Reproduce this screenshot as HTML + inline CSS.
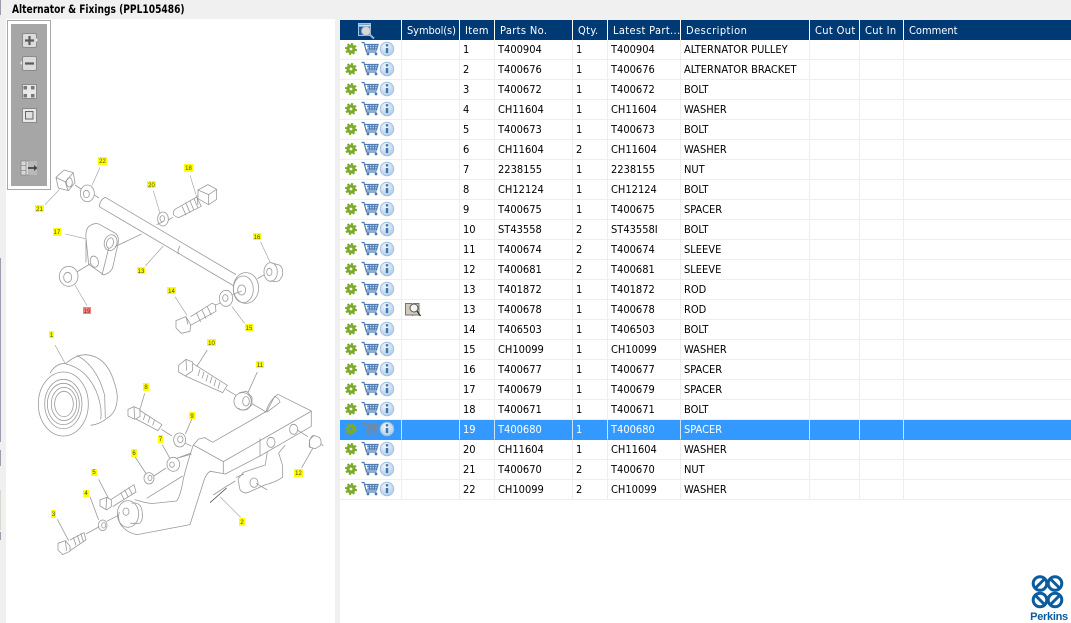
<!DOCTYPE html>
<html><head><meta charset="utf-8"><title>Alternator &amp; Fixings</title>
<style>
html,body{margin:0;padding:0;width:1071px;height:623px;overflow:hidden;background:#fff;font-family:"DejaVu Sans Condensed","DejaVu Sans","Liberation Sans",sans-serif}
#top{position:absolute;left:0;top:0;width:1071px;height:20px;background:#f0f0f0}
#title{position:absolute;left:12px;top:1px;font:bold 11.5px/16px "DejaVu Sans Condensed","Liberation Sans",sans-serif;color:#000;white-space:nowrap;transform:scaleX(.88);transform-origin:0 0}
#lside{position:absolute;left:0;top:0;width:6px;height:623px;background:#f0f0f0}
#rside{position:absolute;left:335px;top:0;width:5px;height:623px;background:#f0f0f0}
.st{position:absolute;left:0;width:1px;background:#9a9dae}
#art{position:absolute;left:0;top:0}
table{position:absolute;left:340px;top:20px;width:731px;border-collapse:separate;border-spacing:0;table-layout:fixed;font-size:11px;color:#000}
th{height:20px;box-sizing:border-box;background:#003a75;color:#fff;font-weight:normal;text-align:left;padding:0 0 0 5px;border-right:1px solid #fff;letter-spacing:.35px;white-space:nowrap;overflow:hidden;font-size:11px}
td{height:20px;box-sizing:border-box;padding:0 0 0 3px;border-right:1px solid #eee;border-bottom:1px solid #eee;white-space:nowrap;overflow:hidden;position:relative}
th:last-child,td:last-child{border-right:0}
td:first-child,th:first-child{padding:0}
td svg,th svg{display:block}
tr.s td{background:#3399ff;color:#fff;border-right-color:#cfe4fb;border-bottom-color:#3399ff}
</style></head><body>
<svg width="0" height="0" style="position:absolute">
<defs>
<radialGradient id="ig" cx=".4" cy=".3" r=".8"><stop offset="0" stop-color="#f1f6fb"/><stop offset="1" stop-color="#a9c8e6"/></radialGradient>
<symbol id="ic" viewBox="0 0 62 19" width="62" height="19">
<circle cx="11" cy="9" r="3" fill="none" stroke="#7cab2c" stroke-width="3.200"/>
<circle cx="11" cy="9" r="5" fill="none" stroke="#7cab2c" stroke-width="2" stroke-dasharray="2.100 1.800"/>
<path d="M21.500 2.500h2.500l2.500 9.500h10M25 4.500h13l-1.500 5.500h-10.500M27 6.300h10.500M27.500 8.200h9.500M29 4.500l.8 5.500M32 4.500v5.500M35 4.500l-.8 5.500" fill="none" stroke="#4c7cb3" stroke-width="1.200"/>
<circle cx="28" cy="14" r="1.400" fill="#4c7cb3"/><circle cx="36" cy="14" r="1.400" fill="#4c7cb3"/>
<circle cx="47" cy="9" r="6.800" fill="url(#ig)" stroke="#9dbcdb" stroke-width=".8"/>
<path d="M47 8v5" stroke="#3f77ad" stroke-width="2.400"/><circle cx="47" cy="5.300" r="1.300" fill="#3f77ad"/>
</symbol>
<symbol id="ics" viewBox="0 0 62 19" width="62" height="19">
<circle cx="11" cy="9" r="3" fill="#3399ff" stroke="#7cab2c" stroke-width="3.200"/>
<circle cx="11" cy="9" r="5" fill="none" stroke="#7cab2c" stroke-width="2" stroke-dasharray="2.100 1.800"/>
<path d="M21.500 2.500h2.500l2.500 9.500h10M25 4.500h13l-1.500 5.500h-10.500M27 6.300h10.500M27.500 8.200h9.500M29 4.500l.8 5.500M32 4.500v5.500M35 4.500l-.8 5.500" fill="none" stroke="#6f8aa8" stroke-width="1.200"/>
<circle cx="28" cy="14" r="1.400" fill="#6f8aa8"/><circle cx="36" cy="14" r="1.400" fill="#6f8aa8"/>
<circle cx="47" cy="9" r="6.800" fill="url(#ig)" stroke="#9dbcdb" stroke-width=".8"/>
<path d="M47 8v5" stroke="#3f77ad" stroke-width="2.400"/><circle cx="47" cy="5.300" r="1.300" fill="#3f77ad"/>
</symbol>
</defs></svg>

<div id="top"></div><div id="lside"></div><div id="rside"></div>
<div class="st" style="top:0;height:15px"></div><div class="st" style="top:258px;height:184px"></div><div class="st" style="top:450px;height:16px"></div><div class="st" style="top:490px;height:40px;background:#d5d8cc"></div><div class="st" style="top:532px;height:8px"></div>
<div id="title">Alternator &amp; Fixings (PPL105486)</div>

<svg id="art" width="336" height="623" viewBox="0 0 336 623">
<defs><filter id="soft" x="-5%" y="-5%" width="110%" height="110%"><feGaussianBlur stdDeviation=".3"/></filter></defs>
<rect x="6" y="19" width="329" height="1" fill="#fff"/>
<g filter="url(#soft)" fill="none" stroke="#9a9a9a" stroke-width="2.400" stroke-linejoin="round">
<g transform="translate(0,150) scale(.3333)">
<path d="M168 82l24-22 28 8 5 30-20 24-30-8zM168 82l28 14 8 26M196 96l24-28"/><ellipse cx="208" cy="97" rx="9" ry="14"/>
<path d="M225 105l18 12"/>
<ellipse cx="262" cy="130" rx="21" ry="25"/><ellipse cx="259" cy="132" rx="9" ry="11"/>
<path d="M283 135l14 9"/>
<path d="M316 142l392 232M298 170l404 238M298 170q2-22 18-28M540 288q-8 14-5 25M345 290l80-38"/>
<g stroke-width="1.800"><path d="M300 52l-24 54M570 76l18 58M460 122l20 68M135 164l44-46M196 252l60 14M782 276l28 60M490 288l-54 60M225 405l36 62M525 440l36 56M696 470l38 50"/></g>
<path d="M594 120l30-16 26 14v30l-24 16-32-18zM594 120l32 14v30M626 134l24-16M590 135l4 30"/>
<path d="M530 175l60-34 14 28-68 34q-18-6-16-14q0-10 10-14zM546 168l12 28M558 160l12 28M570 153l12 28M582 146l12 28"/>
<ellipse cx="489" cy="207" rx="16" ry="21"/><ellipse cx="487" cy="206" rx="7" ry="9"/><path d="M470 224l18-8M505 210l14-8"/>
<path d="M258 265q-2-30 12-38 16-10 28-4l50 28q10 10 6 30l-16 72q-4 14-26 22l-46-32zM258 338l0-72M306 375l20-80"/>
<ellipse cx="332" cy="278" rx="19" ry="24" transform="rotate(15 332 278)"/><ellipse cx="330" cy="279" rx="10" ry="16" transform="rotate(15 330 279)"/>
<ellipse cx="283" cy="335" rx="12" ry="17" transform="rotate(-15 283 335)"/><path d="M232 365l40-24"/>
<ellipse cx="206" cy="379" rx="28" ry="30"/><ellipse cx="203" cy="382" rx="12" ry="15"/>
<ellipse cx="738" cy="414" rx="38" ry="46"/><ellipse cx="730" cy="418" rx="30" ry="40"/><ellipse cx="725" cy="420" rx="12" ry="15"/>
<path d="M812 338l28 8q10 8 8 30l-10 16q-14 6-26 0M772 386l22-12"/><ellipse cx="812" cy="366" rx="20" ry="28"/><ellipse cx="808" cy="366" rx="8" ry="11"/>
<ellipse cx="678" cy="445" rx="20" ry="24"/><ellipse cx="676" cy="444" rx="8" ry="10"/><path d="M695 435l30-12M645 466l16-7"/>
<path d="M528 512l30-12 14 24-2 20-26 6-16-16zM558 500l6 24M572 500l64-40 10 4 2 20-76 42M590 490l12 26M606 480l12 26M622 470l12 26"/>
</g>
<g transform="translate(0,330) scale(.3333)">
<path d="M165 45l32 58" stroke-width="1.800"/>
<ellipse cx="190" cy="222" rx="75" ry="96"/><ellipse cx="190" cy="222" rx="56" ry="74"/><ellipse cx="190" cy="222" rx="48" ry="62"/><ellipse cx="192" cy="222" rx="38" ry="50"/><ellipse cx="192" cy="222" rx="28" ry="38"/>
<path d="M150 130q16-30 48-30 30-26 60-26 60 4 84 80 10 30 10 50-2 44-30 60-24 20-50 22"/><path d="M198 102q60 14 90 80 20 50 14 86"/><path d="M230 76q60 30 84 120l2 68"/>
<path d="M536 106l22-18 20 8 0 26-22 16-20-12zM558 88l2 34M578 100l104 66-14 22-112-50M600 118l-6 20M612 126l-6 20M624 134l-6 20M636 140l-6 20M648 148l-6 20M660 156l-6 20M678 178l30 18M622 60l-32 50M772 126l-28 62"/>
<path d="M718 188l22-4 16 18 0 22-14 14q-20 6-26-4"/><ellipse cx="728" cy="214" rx="26" ry="26"/><ellipse cx="738" cy="214" rx="10" ry="14"/><path d="M758 222l40 24"/>
<path d="M384 238l18-8 18 8 0 22-16 8-20-10zM402 230l2 36M418 240l68 44-12 18-68-36M436 252l-6 18M450 260l-6 18M464 268l-6 18M434 190l-14 48M484 298l32 20"/>
<ellipse cx="539" cy="330" rx="18" ry="21"/><ellipse cx="541" cy="328" rx="8" ry="10"/><path d="M576 266l-20 46M556 340l18 8"/>
<path d="M487 344l22 40M538 382l32-12"/><ellipse cx="520" cy="403" rx="19" ry="21"/><ellipse cx="516" cy="404" rx="7" ry="8"/>
<path d="M405 380l34 52M462 438l36-24"/><ellipse cx="447" cy="445" rx="15" ry="17"/><ellipse cx="450" cy="444" rx="6" ry="8"/>
<path d="M300 510l20-8 14 8 0 20-14 10-20-12zM320 502l-2 36M334 508l68-44 6 22-70 44M362 488l10 20M374 480l10 20M386 472l10 20M296 448l30 58"/>
<path d="M174 640l22-8 14 16 0 16-22 10-14-14zM196 632l4 30M210 630l42-22 6 22-48 32M220 622l8 24M232 616l8 24M242 610l8 24M172 568l34 64M258 612l40-22"/>
<path d="M270 500l26 70M320 574l36-18"/><ellipse cx="308" cy="586" rx="13" ry="16"/><ellipse cx="311" cy="586" rx="6" ry="8"/>
<path d="M548 438L440 505M575 372L530 385"/>
<path d="M580 345l16-18 18-4 24 14 160-92q10-34 36-52l100 50v46L780 378l-104 54-44-8q-14 4-24 40l-38 120-158 30q-30-4-50-30-10-20-4-38l0 0"/>
<path d="M580 345l90 50v37M670 395L935 243M780 325v52M800 245q14-26 24-46 16 8 16 18l-40 30"/>
<path d="M580 345q-18 52-30 102-8 50-20 66l-76 8q-26-4-50-12"/>
<ellipse cx="813" cy="337" rx="12" ry="15"/><ellipse cx="881" cy="298" rx="12" ry="15"/><path d="M892 300l32 20"/>
<ellipse cx="384" cy="552" rx="32" ry="40"/><ellipse cx="378" cy="545" rx="9" ry="11"/><path d="M395 520q30-6 32 30t-20 30l-16 0"/>
<path d="M856 345l-20 24 12 38 0 34q-16 14-54 24l-44 20q-18 10-30-6l-6-32 16-20 66-22 6-40M708 442l24-10M768 460l34 20M640 495l36-24 30-18"/>
<ellipse cx="762" cy="458" rx="12" ry="14"/>
<path d="M630 518l50-44" stroke="#555"/><path d="M660 500l62 62" stroke-width="1.800"/>
<path d="M930 352l-2-22 14-14 16 6q8 10 4 24l-16 10zM940 316q-14 8-12 36M962 340l8 8M905 414l34-60"/>
</g>
</g>
<rect x="7.500" y="20.500" width="43" height="169" fill="#fff" stroke="#a8a8a8"/>
<rect x="11" y="24" width="36" height="162" fill="#a6a6a6"/>
<g stroke="#8a8a8a" fill="#dcdcdc" stroke-width="1">
<rect x="22.500" y="33.500" width="14" height="14" rx="1.500"/><rect x="22.500" y="56.500" width="14" height="14" rx="1.500"/><rect x="22.500" y="84.500" width="14" height="14" fill="#e8e8e8"/><rect x="22.500" y="108.500" width="14" height="14" fill="#e8e8e8"/>
</g>
<path d="M36 38l2 2-2 2zM22 61l-2 2 2 2z" fill="#e8e8e8"/>
<path d="M29.500 36v9M25 40.500h9M25 63.500h9" stroke="#5c5c5c" stroke-width="2.200" fill="none"/>
<path d="M23.500 86h3.500v3.500h-3.500zM31 86h3.500v3.500h-3.500zM23.500 94h3.500v3.500h-3.500zM31 94h3.500v3.500h-3.500z" fill="#777"/>
<rect x="25.500" y="111.500" width="7.500" height="7.500" fill="#e0e0e0" stroke="#666"/>
<path d="M21 161h8v14h-8z" fill="#d8d8d8" stroke="#8a8a8a" stroke-width=".8"/><path d="M21 165.500h5M21 170.500h5M26 161v14" stroke="#8a8a8a" stroke-width=".8"/>
<rect x="29" y="161" width="8" height="14" fill="#c2c2c2" opacity=".7"/>
<path d="M28 168h7" stroke="#444" stroke-width="1.800"/><path d="M34 165l3.500 3-3.500 3z" fill="#444"/>
<g font-family="Liberation Sans,sans-serif" font-size="6" text-anchor="middle" fill="#444">
<g fill="#ffff00" stroke="none">
<rect x="98" y="157" width="9" height="8"/><rect x="184" y="164" width="9" height="8"/><rect x="147" y="181" width="9" height="7"/><rect x="35" y="205" width="9" height="7"/><rect x="53" y="228" width="8" height="8"/><rect x="253" y="233" width="8" height="7"/><rect x="137" y="267" width="8" height="7"/><rect x="167" y="287" width="9" height="7"/><rect x="245" y="324" width="8" height="7"/><rect x="49" y="331" width="5" height="7"/><rect x="207" y="339" width="9" height="7"/><rect x="256" y="361" width="8" height="7"/><rect x="143" y="383" width="6" height="8"/><rect x="189" y="412" width="6" height="7"/><rect x="158" y="435" width="5" height="8"/><rect x="131" y="449" width="6" height="8"/><rect x="91" y="469" width="6" height="7"/><rect x="83" y="490" width="6" height="7"/><rect x="51" y="510" width="5" height="8"/><rect x="294" y="469" width="9" height="8"/><rect x="239" y="518" width="6" height="8"/>
</g>
<rect x="83" y="307" width="8" height="7" fill="#ff8080"/>
<text x="102.500" y="163">22</text><text x="188.500" y="170">18</text><text x="151.500" y="187">20</text><text x="39.500" y="211">21</text><text x="57" y="234">17</text><text x="257" y="239">16</text><text x="141" y="273">13</text><text x="171.500" y="293">14</text><text x="87" y="313">19</text><text x="249" y="330">15</text><text x="51.500" y="337">1</text><text x="211.500" y="345">10</text><text x="260" y="367">11</text><text x="146" y="389">8</text><text x="192" y="418">9</text><text x="160.500" y="441">7</text><text x="134" y="455">6</text><text x="94" y="474">5</text><text x="86" y="495">4</text><text x="53.500" y="516">3</text><text x="298.500" y="475">12</text><text x="242" y="524">2</text>
</g>
</svg>

<table>
<colgroup><col style="width:62px"><col style="width:58px"><col style="width:35px"><col style="width:78px"><col style="width:35px"><col style="width:73px"><col style="width:129px"><col style="width:50px"><col style="width:44px"><col style="width:167px"></colgroup>
<thead><tr><th><svg width="61" height="20"><rect x="18.500" y="3.500" width="12" height="12" fill="#1d5f9e" stroke="#9cc6ea"/><path d="M19 5.500h11" stroke="#cfe6f8" stroke-width="2"/><circle cx="26" cy="11" r="4.500" fill="#d8d8d8" stroke="#9ab"/><path d="M29.500 14.500l4.500 4" stroke="#8fb8dc" stroke-width="2"/></svg></th><th style="letter-spacing:-.1px">Symbol(s)</th><th>Item</th><th>Parts No.</th><th>Qty.</th><th>Latest Part...</th><th style="letter-spacing:.45px">Description</th><th>Cut Out</th><th>Cut In</th><th style="letter-spacing:0">Comment</th></tr></thead>
<tbody>
<tr><td><svg width="61" height="19"><use href="#ic"/></svg></td><td></td><td>1</td><td>T400904</td><td>1</td><td>T400904</td><td>ALTERNATOR PULLEY</td><td></td><td></td><td></td></tr>
<tr><td><svg width="61" height="19"><use href="#ic"/></svg></td><td></td><td>2</td><td>T400676</td><td>1</td><td>T400676</td><td>ALTERNATOR BRACKET</td><td></td><td></td><td></td></tr>
<tr><td><svg width="61" height="19"><use href="#ic"/></svg></td><td></td><td>3</td><td>T400672</td><td>1</td><td>T400672</td><td>BOLT</td><td></td><td></td><td></td></tr>
<tr><td><svg width="61" height="19"><use href="#ic"/></svg></td><td></td><td>4</td><td>CH11604</td><td>1</td><td>CH11604</td><td>WASHER</td><td></td><td></td><td></td></tr>
<tr><td><svg width="61" height="19"><use href="#ic"/></svg></td><td></td><td>5</td><td>T400673</td><td>1</td><td>T400673</td><td>BOLT</td><td></td><td></td><td></td></tr>
<tr><td><svg width="61" height="19"><use href="#ic"/></svg></td><td></td><td>6</td><td>CH11604</td><td>2</td><td>CH11604</td><td>WASHER</td><td></td><td></td><td></td></tr>
<tr><td><svg width="61" height="19"><use href="#ic"/></svg></td><td></td><td>7</td><td>2238155</td><td>1</td><td>2238155</td><td>NUT</td><td></td><td></td><td></td></tr>
<tr><td><svg width="61" height="19"><use href="#ic"/></svg></td><td></td><td>8</td><td>CH12124</td><td>1</td><td>CH12124</td><td>BOLT</td><td></td><td></td><td></td></tr>
<tr><td><svg width="61" height="19"><use href="#ic"/></svg></td><td></td><td>9</td><td>T400675</td><td>1</td><td>T400675</td><td>SPACER</td><td></td><td></td><td></td></tr>
<tr><td><svg width="61" height="19"><use href="#ic"/></svg></td><td></td><td>10</td><td>ST43558</td><td>2</td><td>ST43558I</td><td>BOLT</td><td></td><td></td><td></td></tr>
<tr><td><svg width="61" height="19"><use href="#ic"/></svg></td><td></td><td>11</td><td>T400674</td><td>2</td><td>T400674</td><td>SLEEVE</td><td></td><td></td><td></td></tr>
<tr><td><svg width="61" height="19"><use href="#ic"/></svg></td><td></td><td>12</td><td>T400681</td><td>2</td><td>T400681</td><td>SLEEVE</td><td></td><td></td><td></td></tr>
<tr><td><svg width="61" height="19"><use href="#ic"/></svg></td><td></td><td>13</td><td>T401872</td><td>1</td><td>T401872</td><td>ROD</td><td></td><td></td><td></td></tr>
<tr><td><svg width="61" height="19"><use href="#ic"/></svg></td><td style="padding:0"><svg width="20" height="19"><path d="M3.500 3.500h6l1 1 1-1h5.500v11.500h-6l-.5.5-.5-.5h-6.500z" fill="#cfcabb" stroke="#77736a"/><circle cx="12" cy="8" r="4" fill="#f4f4f4" stroke="#555"/><path d="M15 11l3.500 5" stroke="#333" stroke-width="1.300"/></svg></td><td>13</td><td>T400678</td><td>1</td><td>T400678</td><td>ROD</td><td></td><td></td><td></td></tr>
<tr><td><svg width="61" height="19"><use href="#ic"/></svg></td><td></td><td>14</td><td>T406503</td><td>1</td><td>T406503</td><td>BOLT</td><td></td><td></td><td></td></tr>
<tr><td><svg width="61" height="19"><use href="#ic"/></svg></td><td></td><td>15</td><td>CH10099</td><td>1</td><td>CH10099</td><td>WASHER</td><td></td><td></td><td></td></tr>
<tr><td><svg width="61" height="19"><use href="#ic"/></svg></td><td></td><td>16</td><td>T400677</td><td>1</td><td>T400677</td><td>SPACER</td><td></td><td></td><td></td></tr>
<tr><td><svg width="61" height="19"><use href="#ic"/></svg></td><td></td><td>17</td><td>T400679</td><td>1</td><td>T400679</td><td>SPACER</td><td></td><td></td><td></td></tr>
<tr><td><svg width="61" height="19"><use href="#ic"/></svg></td><td></td><td>18</td><td>T400671</td><td>1</td><td>T400671</td><td>BOLT</td><td></td><td></td><td></td></tr>
<tr class="s"><td><svg width="61" height="19"><use href="#ics"/></svg></td><td></td><td>19</td><td>T400680</td><td>1</td><td>T400680</td><td>SPACER</td><td></td><td></td><td></td></tr>
<tr><td><svg width="61" height="19"><use href="#ic"/></svg></td><td></td><td>20</td><td>CH11604</td><td>1</td><td>CH11604</td><td>WASHER</td><td></td><td></td><td></td></tr>
<tr><td><svg width="61" height="19"><use href="#ic"/></svg></td><td></td><td>21</td><td>T400670</td><td>2</td><td>T400670</td><td>NUT</td><td></td><td></td><td></td></tr>
<tr><td><svg width="61" height="19"><use href="#ic"/></svg></td><td></td><td>22</td><td>CH10099</td><td>2</td><td>CH10099</td><td>WASHER</td><td></td><td></td><td></td></tr>
</tbody></table>

<svg style="position:absolute;left:1025px;top:570px" width="46" height="53" viewBox="0 0 46 53">
<g fill="none" stroke="#0b5c9e" stroke-width="3">
<circle cx="15" cy="13.500" r="6.800"/><circle cx="30" cy="13.500" r="6.800"/><circle cx="15" cy="30" r="6.800"/><circle cx="30" cy="30" r="6.800"/>
<path d="M10 18.500l10-10M25 8.500l10 10M10 25l10 10M25 35l10-10"/>
</g>
<text x="24" y="50" text-anchor="middle" font-family="Liberation Sans,sans-serif" font-weight="bold" font-size="11" letter-spacing="-.3" fill="#0b5c9e">Perkins</text>
</svg>
</body></html>
